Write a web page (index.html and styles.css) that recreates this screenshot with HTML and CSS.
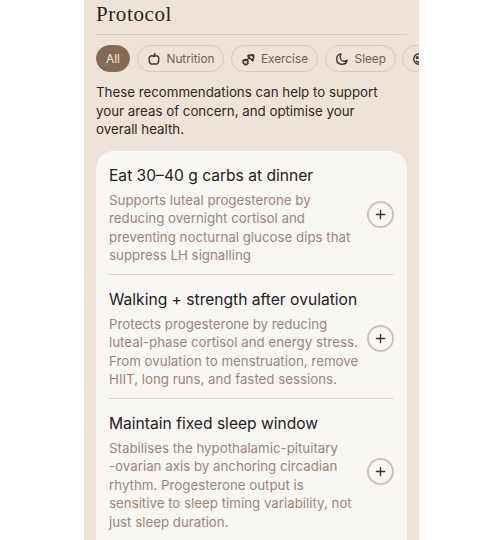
FILE: index.html
```html
<!DOCTYPE html>
<html lang="en">
<head>
    <meta charset="UTF-8">
    <meta name="viewport" content="width=device-width, initial-scale=1.0">
    <title>Protocol</title>
    <link rel="stylesheet" href="styles.css">
</head>
<body>
    <div class="panel">
        <h1 class="page-title">Protocol</h1>

        <div class="chips">
            <div class="chip chip-active">All</div>
            <div class="chip">
                <svg class="chip-icon" viewBox="0 0 16 16"><path d="M8 5.200C6.600 4 4.600 4.100 3.400 5.200 2.200 6.400 2 8 2.500 10c.5 2 1.800 3.900 3.500 3.900.8 0 1.300-.4 2-.4s1.200.4 2 .4c1.700 0 3-1.900 3.500-3.900.5-2 .3-3.600-.9-4.800C11.400 4.100 9.400 4 8 5.200z"/><path d="M8 5.200c-.1-1.400.3-2.500 1.200-3.400"/></svg>
                Nutrition
            </div>
            <div class="chip">
                <svg class="chip-icon" viewBox="0 0 16 16"><path d="M2.100 10.300l1.700-1.700 1.100 1.100 1.200-1.200 2.200 2.200-1.200 1.200 1.100 1.100-1.700 1.700-1.100-1.100-.9.900-2.200-2.200.9-.9z"/><path d="M7.700 4.700l1.200-1.200 1.100 1.100 1.700-1.700 1.100 1.100.9-.9 1 1-.9.900 1.100 1.100-1.700 1.700 1.100 1.100-1.200 1.200z"/><path d="M6.500 9.500l3-3"/></svg>
                Exercise
            </div>
            <div class="chip">
                <svg class="chip-icon" viewBox="0 0 16 16"><path d="M6.800 2.200a6 6 0 1 0 7 7.200c-.8.800-1.900 1.100-3 1.100a4.800 4.800 0 0 1-4.800-4.800c0-1.200.2-2.400.8-3.500z"/></svg>
                Sleep
            </div>
            <div class="chip chip-cut">
                <svg class="chip-icon" viewBox="0 0 16 16"><circle cx="8" cy="8" r="6"/><circle cx="6" cy="6.500" r="1"/><path d="M5 10.500c1 1 2 1.200 3 1.200"/></svg>
            </div>
        </div>

        <p class="intro">These recommendations can help to support<br>your areas of concern, and optimise your<br>overall health.</p>

        <div class="card">
            <div class="item">
                <div class="item-body">
                    <h2 class="item-title">Eat 30–40 g carbs at dinner</h2>
                    <p class="item-text">Supports luteal progesterone by<br>reducing overnight cortisol and<br>preventing nocturnal glucose dips that<br>suppress LH signalling</p>
                </div>
                <button class="add-button"><svg viewBox="0 0 12 12"><path d="M6 1.500v9M1.500 6h9"/></svg></button>
            </div>
            <div class="item">
                <div class="item-body">
                    <h2 class="item-title">Walking + strength after ovulation</h2>
                    <p class="item-text">Protects progesterone by reducing<br>luteal-phase cortisol and energy stress.<br>From ovulation to menstruation, remove<br>HIIT, long runs, and fasted sessions.</p>
                </div>
                <button class="add-button"><svg viewBox="0 0 12 12"><path d="M6 1.500v9M1.500 6h9"/></svg></button>
            </div>
            <div class="item">
                <div class="item-body">
                    <h2 class="item-title">Maintain fixed sleep window</h2>
                    <p class="item-text">Stabilises the hypothalamic-pituitary<br>-ovarian axis by anchoring circadian<br>rhythm. Progesterone output is<br>sensitive to sleep timing variability, not<br>just sleep duration.</p>
                </div>
                <button class="add-button"><svg viewBox="0 0 12 12"><path d="M6 1.500v9M1.500 6h9"/></svg></button>
            </div>
        </div>
    </div>
</body>
</html>
```

FILE: styles.css
```css
html, body {
    height: 540px;
    overflow: hidden;
}

body {
    margin: 0;
    padding: 0;
    background-color: #fff;
    font-family: Inter, "Liberation Sans", sans-serif;
}

.panel {
    width: 335px;
    height: 540px;
    margin-left: 84px;
    padding: 0 12px;
    box-sizing: border-box;
    overflow: hidden;
    background-color: #eee3d8;
}

.page-title {
    margin: 0;
    padding: 2px 0 8px;
    border-bottom: 1px solid #dccfc2;
    font-family: "Liberation Serif", serif;
    font-size: 21px;
    line-height: 24px;
    font-weight: 400;
    letter-spacing: 0.6px;
    color: #2b2520;
}

.chips {
    display: flex;
    gap: 6.500px;
    margin-top: 10px;
    width: 340px;
}

.chip {
    display: flex;
    align-items: center;
    flex-shrink: 0;
    gap: 6px;
    height: 27px;
    padding: 0 9px;
    box-sizing: border-box;
    border: 1px solid #d8c9bb;
    border-radius: 14px;
    font-size: 11.800px;
    color: #6f6259;
}

.chip-active {
    width: 34px;
    padding: 0;
    justify-content: center;
    border-color: #866a56;
    background-color: #866a56;
    color: #f3e9df;
}

.chip-cut {
    width: 40px;
}

.chip-icon {
    flex-shrink: 0;
    width: 14px;
    height: 14px;
    fill: none;
    stroke: #3d3530;
    stroke-width: 1.600;
    stroke-linecap: round;
    stroke-linejoin: round;
}

.intro {
    margin: 11px 0 0;
    font-size: 13.300px;
    line-height: 18.500px;
    color: #2d2824;
}

.card {
    margin-top: 12px;
    padding: 0 13px 40px;
    background-color: #f9f7f4;
    border-radius: 18px;
}

.item {
    display: flex;
    align-items: center;
    justify-content: space-between;
    padding: 14px 0 9px;
    border-bottom: 1px solid #dfd4ca;
}

.item-title {
    margin: 0 0 4px;
    font-size: 15.600px;
    line-height: 22px;
    font-weight: 400;
    color: #24201d;
}

.item-text {
    margin: 0;
    font-size: 13.300px;
    line-height: 18.500px;
    color: #9b8678;
}

.add-button {
    display: flex;
    align-items: center;
    justify-content: center;
    flex-shrink: 0;
    width: 27px;
    height: 27px;
    padding: 0;
    border: 2px solid #cfc0b2;
    border-radius: 50%;
    background-color: transparent;
}

.add-button svg {
    width: 11px;
    height: 11px;
    fill: none;
    stroke: #3a332e;
    stroke-width: 1.500;
    stroke-linecap: round;
}
```
